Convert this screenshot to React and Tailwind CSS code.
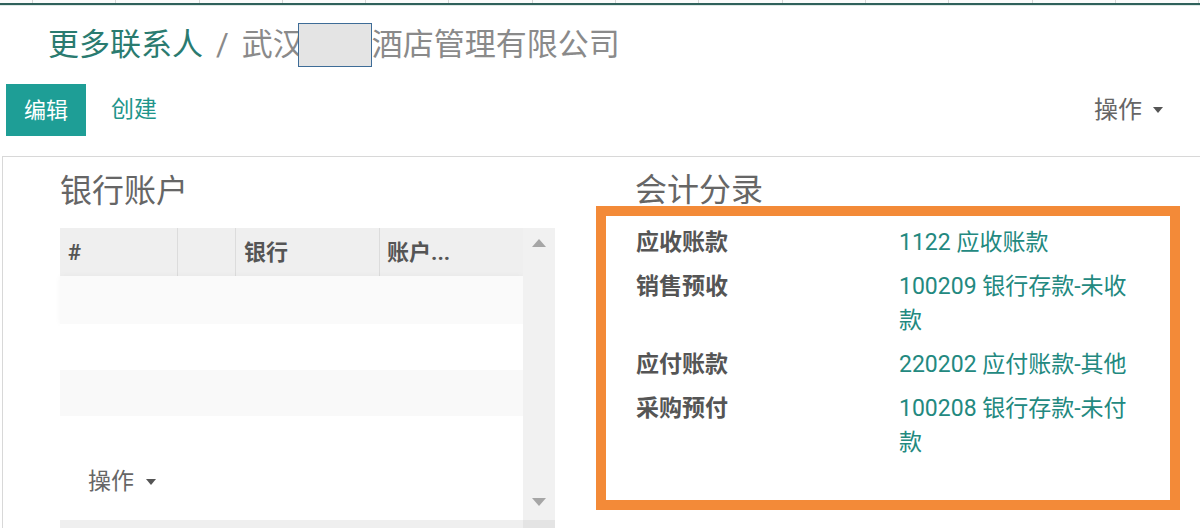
import React from "react";

const font = { fontFamily: "Roboto, 'Noto Sans CJK SC', sans-serif" };

function Caret({ className = "" }) {
  return (
    <span
      className={`inline-block w-0 h-0 border-l-[5px] border-r-[5px] border-t-[6px] border-l-transparent border-r-transparent border-t-[#555] ${className}`}
    />
  );
}

export default function App() {
  const cells = Array.from({ length: 14 });
  const rows = [
    { label: "应收账款", value: "1122 应收账款" },
    { label: "销售预收", value: "100209 银行存款-未收款" },
    { label: "应付账款", value: "220202 应付账款-其他" },
    { label: "采购预付", value: "100208 银行存款-未付款" },
  ];
  return (
    <div
      className="w-[1200px] h-[528px] overflow-hidden bg-white text-[#666] font-['Roboto','Noto_Sans_CJK_SC',sans-serif]"
      style={font}
    >
      {/* top strip */}
      <div className="flex h-[3px] bg-[#fbfbfb]">
        <div className="w-[33px] shrink-0 border-r border-[#d6d6d6]" />
        {cells.map((_, i) => (
          <div key={i} className="w-[83.3px] shrink-0 border-r border-[#d6d6d6]" />
        ))}
      </div>
      <div className="h-[2px] bg-[#2f615b]" />
      <div className="h-px bg-[#dfe8e6]" />

      {/* breadcrumb */}
      <div className="pt-[17px] pl-[48px] h-[78px] box-border">
        <div className="flex items-center h-[44px] text-[31px] leading-[44px] whitespace-nowrap">
          <span className="text-[#2a7b70]">更多联系人</span>
          <span className="text-[#8a8a8a] mx-[13px]">/</span>
          <span className="text-[#8a8a8a]">武汉</span>
          <span className="inline-block w-[74px] h-[44px] ml-[-6px] bg-[#e4e4e4] border-[1.5px] border-[#3e6c97] box-border" />
          <span className="text-[#8a8a8a]">酒店管理有限公司</span>
        </div>
      </div>

      {/* buttons row */}
      <div className="flex items-center h-[52px] pl-[6px] pr-[37px]">
        <div className="w-[80px] h-[52px] bg-[#1e9e96] text-white text-[22px] flex items-center justify-center">
          编辑
        </div>
        <div className="ml-[25px] text-[23px] text-[#1f958b]">创建</div>
        <div className="ml-auto flex items-center text-[24px] text-[#666]">
          <span>操作</span>
          <Caret className="ml-[11px]" />
        </div>
      </div>

      {/* sheet */}
      <div className="mt-[20px] ml-[2px] border-t border-l border-[#d8d8d8] flex h-[400px]">
        {/* left column */}
        <div className="pl-[57px] w-[552px] shrink-0">
          <div className="pt-[14px] text-[32px] leading-[40px] text-[#666]">银行账户</div>
          <div className="mt-[17px] w-[495px] flex">
            <div className="w-[463px] flex flex-col">
              <div className="flex h-[48px] bg-[#efefef] text-[22px] font-bold text-[#555] items-center">
                <div className="w-[118px] h-full flex items-center pl-[8px] border-r border-[#dcdcdc]">#</div>
                <div className="w-[58px] h-full border-r border-[#dcdcdc]" />
                <div className="w-[144px] h-full flex items-center pl-[8px] border-r border-[#dcdcdc]">银行</div>
                <div className="w-[143px] h-full flex items-center pl-[7px]">账户...</div>
              </div>
              <div className="h-[48px] bg-[#fafafa] shadow-[0_0_6px_rgba(0,0,0,0.04)]" />
              <div className="h-[46px] bg-white" />
              <div className="h-[46px] bg-[#f9f9f9]" />
              <div className="h-[104px] bg-white relative">
                <div className="absolute left-[28px] top-[50px] flex items-center text-[23px] leading-[32px] text-[#666]">
                  <span>操作</span>
                  <Caret className="ml-[12px]" />
                </div>
              </div>
              <div className="h-[8px] bg-[#efefef]" />
            </div>
            <div className="w-[32px] bg-[#f1f1f1] flex flex-col items-center">
              <div className="mt-[11px] w-0 h-0 border-l-[7px] border-r-[7px] border-b-[8px] border-l-transparent border-r-transparent border-b-[#a6a6a6]" />
              <div className="flex-1" />
              <div className="mb-[14px] w-0 h-0 border-l-[7px] border-r-[7px] border-t-[8px] border-l-transparent border-r-transparent border-t-[#a6a6a6]" />
              <div className="h-[8px] w-full bg-[#e4e4e4]" />
            </div>
          </div>
        </div>

        {/* right column */}
        <div className="ml-[41px] w-[584px] shrink-0">
          <div className="pt-[13px] pl-[39px] text-[32px] leading-[40px] text-[#666]">会计分录</div>
          <div className="relative mt-[-4px] h-[304px] border-[10px] border-[#f38a38] box-border pt-[5px] pl-[30px]">
            {rows.map((r) => (
              <div key={r.label} className="flex py-[5px] text-[23px] leading-[34px]">
                <div className="w-[263px] shrink-0 font-bold text-[#555]">{r.label}</div>
                <div className="w-[240px] text-[#23897f]">{r.value}</div>
              </div>
            ))}
          </div>
        </div>
      </div>
    </div>
  );
}
